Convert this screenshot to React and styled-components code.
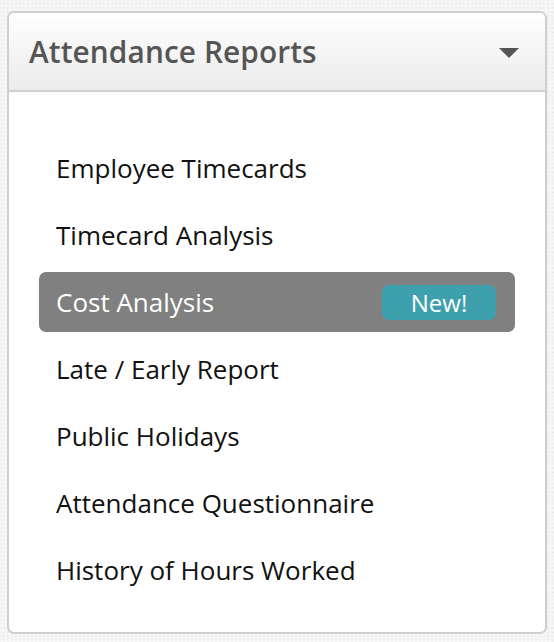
import React from 'react';
import styled, { createGlobalStyle } from 'styled-components';

const GlobalStyle = createGlobalStyle`
    html, body {
        margin: 0;
        padding: 0;
        background: #f3f3f3;
        font-family: "Open Sans", "DejaVu Sans", sans-serif;
    }
`

const Page = styled.div`
    padding: 11px 7px 7px 7px;
    background-color: #f3f3f3;
    background-image:
        radial-gradient(rgba(255, 255, 255, 0.6) 1px, transparent 1px),
        radial-gradient(rgba(0, 0, 0, 0.025) 1px, transparent 1px);
    background-size: 4px 4px, 5px 5px;
    min-height: 642px;
    box-sizing: border-box;
`

const Card = styled.div`
    background: white;
    border: 2px solid #cfcfcf;
    border-radius: 7px;
    overflow: hidden;
    height: 623px;
    box-sizing: border-box;
`

const Header = styled.div`
    display: flex;
    justify-content: space-between;
    align-items: center;
    height: 79px;
    padding: 0 26px 0 20px;
    background: linear-gradient(#ffffff, #ebebeb);
    border-bottom: 2px solid #d0d0d0;
    box-sizing: border-box;

    h1 {
        margin: 0;
        font-size: 29.8px;
        font-weight: 600;
        color: #555;
        letter-spacing: 0.1px;
    }
`

const Caret = styled.span`
    width: 0;
    height: 0;
    border-left: 10px solid transparent;
    border-right: 10px solid transparent;
    border-top: 10px solid #555;
    margin-top: 2px;
`

const List = styled.ul`
    list-style: none;
    margin: 0;
    padding: 46px 30px 0 30px;
    display: flex;
    flex-direction: column;
    gap: 7px;
`

const Item = styled.li`
    display: flex;
    justify-content: space-between;
    align-items: center;
    height: 60px;
    padding: 0 19px 0 17px;
    border-radius: 7px;
    font-size: 26px;
    color: ${props => props.active ? '#fff' : '#111'};
    background: ${props => props.active ? '#808080' : 'transparent'};
    cursor: pointer;
`

const Badge = styled.span`
    display: flex;
    align-items: center;
    justify-content: center;
    width: 114px;
    height: 35px;
    border-radius: 7px;
    background: #3fa0ad;
    color: white;
    font-size: 24px;
`

const reports = [
    { name: 'Employee Timecards' },
    { name: 'Timecard Analysis' },
    { name: 'Cost Analysis', active: true, isNew: true },
    { name: 'Late / Early Report' },
    { name: 'Public Holidays' },
    { name: 'Attendance Questionnaire' },
    { name: 'History of Hours Worked' }
]

const App = () => {
    return (
        <Page>
            <GlobalStyle />
            <Card>
                <Header>
                    <h1>Attendance Reports</h1>
                    <Caret />
                </Header>
                <List>
                    {reports.map(r => (
                        <Item key={r.name} active={r.active}>
                            {r.name}
                            {r.isNew && <Badge>New!</Badge>}
                        </Item>
                    ))}
                </List>
            </Card>
        </Page>
    )
}

export default App;
